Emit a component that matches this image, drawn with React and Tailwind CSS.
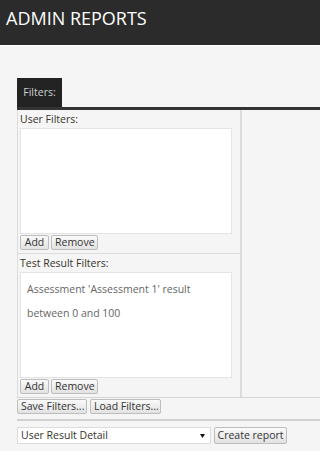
import React from "react";

const Btn = ({ children, w }) => (
    <button
        className={`h-[15px] ${w} px-[3px] border border-[#bdbdbd] rounded-[2px] bg-linear-to-b from-[#fafafa] to-[#e2e2e2] text-[10.5px] leading-[13px] text-[#333] whitespace-nowrap`}
    >
        {children}
    </button>
);

const FilterSection = ({ title, items, last }) => (
    <div className={`pl-[2px] pt-[1px] pb-[3px] ${last ? "" : "border-b border-[#dcdcdc]"}`}>
        <div className="text-[10.5px] leading-[15px] text-[#34342a] pt-[1px]">{title}</div>
        <div className="mt-[1px] w-[212px] h-[106px] bg-white border border-[#e4e4e4] pl-[6px] pt-[4px] text-[10.5px] leading-[24px] text-[#666]">
            {items}
        </div>
        <div className="flex gap-[2px] mt-[1px]">
            <Btn w="w-[29px]">Add</Btn>
            <Btn w="w-[47px]">Remove</Btn>
        </div>
    </div>
);

const App = () => {
    return (
        <div className="w-full min-w-[300px] h-[451px] overflow-hidden bg-[#f4f5f4] font-['Open_Sans',sans-serif]">
            <div className="h-[46px] bg-[#2b2b2b] border-b border-white pl-[6px] pt-[6px]">
                <h1 className="text-[18px] leading-[24px] text-white">ADMIN REPORTS</h1>
            </div>

            <div className="pl-[17px] pt-[32px] w-[600px]">
                <div className="w-[45px] h-[29px] bg-[#232323] flex items-center justify-center text-[10.5px] text-[#d2d2d2]">
                    Filters:
                </div>
                <div className="h-[3px] bg-[#333]" />

                <div className="flex border-b border-[#d6d6d6]">
                    <div className="w-[225px] border-l border-r-2 border-[#dcdcdc]">
                        <FilterSection title="User Filters:" />
                        <FilterSection
                            title="Test Result Filters:"
                            last
                            items={
                                <>
                                    Assessment 'Assessment 1' result
                                    <br />
                                    between 0 and 100
                                </>
                            }
                        />
                    </div>
                    <div className="flex-1" />
                </div>

                <div className="flex gap-[3px] mt-[1px]">
                    <Btn w="w-[70px]">Save Filters...</Btn>
                    <Btn w="w-[71px]">Load Filters...</Btn>
                </div>

                <div className="h-[2px] bg-[#cfcfcf] mt-[5px]" />

                <div className="flex gap-[3px] mt-[6px]">
                    <div className="w-[194px] h-[17px] bg-white border border-[#dcdcdc] flex items-center justify-between pl-[3px] pr-[5px] text-[10.5px] text-[#34342a]">
                        <span>User Result Detail</span>
                        <svg width="5" height="4" viewBox="0 0 5 4">
                            <path d="M0 0h5L2.5 4z" fill="#111" />
                        </svg>
                    </div>
                    <button className="h-[17px] w-[73px] border border-[#bdbdbd] rounded-[2px] bg-linear-to-b from-[#fafafa] to-[#e2e2e2] text-[10.5px] leading-[15px] text-[#333] whitespace-nowrap">
                        Create report
                    </button>
                </div>
            </div>
        </div>
    );
};

export default App;
